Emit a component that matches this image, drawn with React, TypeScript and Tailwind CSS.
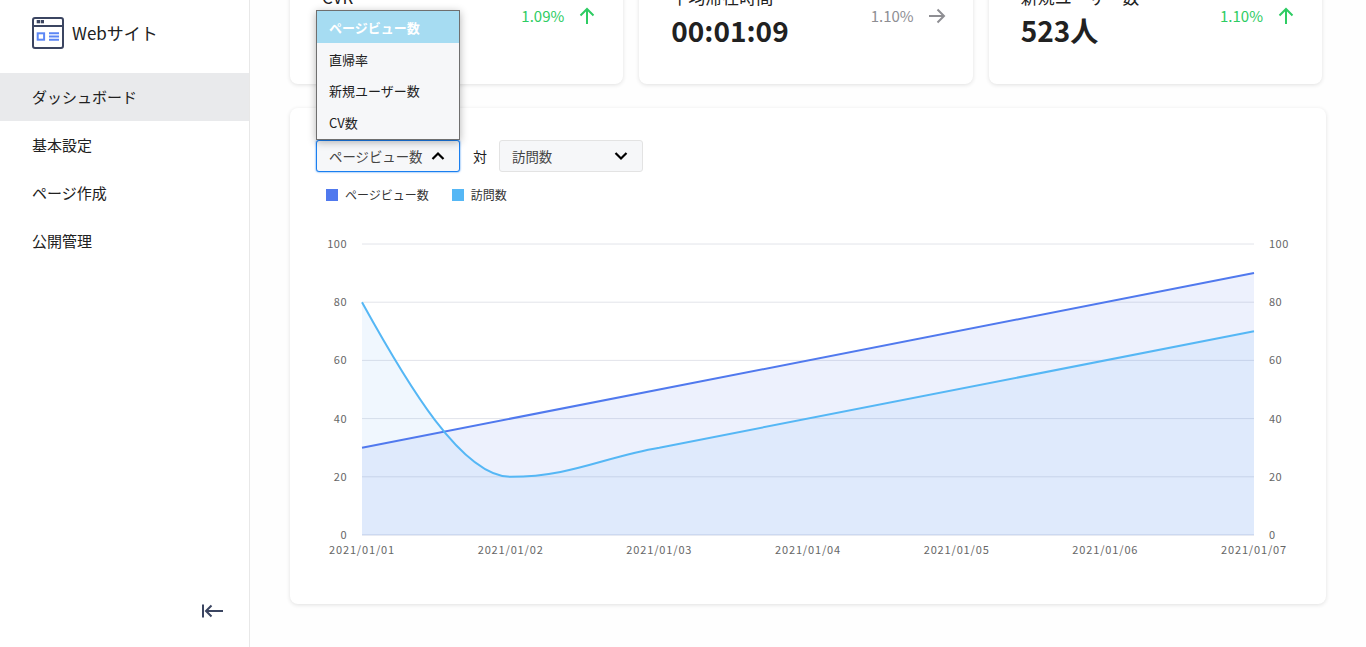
import React from 'react';

const FONT = "font-['Noto_Sans_CJK_JP','Noto_Sans',sans-serif]";

const menuItems = ['ダッシュボード', '基本設定', 'ページ作成', '公開管理'];
const options = ['ページビュー数', '直帰率', '新規ユーザー数', 'CV数'];

const stats = [
  { label: 'CVR', value: '', rate: '1.09%', color: 'text-[#2ecc63]', dir: 'up' },
  { label: '平均滞在時間', value: '00:01:09', rate: '1.10%', color: 'text-[#8e8e93]', dir: 'right' },
  { label: '新規ユーザー数', value: '523人', rate: '1.10%', color: 'text-[#2ecc63]', dir: 'up' },
];

function Arrow({ dir }: { dir: string }) {
  return (
    <svg className="w-[20px] h-[20px]" viewBox="0 0 20 20" fill="none" stroke="currentColor" strokeWidth={2}>
      {dir === 'up' ? <path d="M10 18V3M3.5 9.5L10 3l6.5 6.5" /> : <path d="M2 10h15M10.5 3.5L17 10l-6.5 6.5" />}
    </svg>
  );
}

function Chevron({ up }: { up?: boolean }) {
  return (
    <svg className="w-[14px] h-[10px] text-black" viewBox="0 0 14 10" fill="none" stroke="currentColor" strokeWidth={2.2}>
      <path d={up ? 'M1.5 8L7 2.5 12.5 8' : 'M1.5 2L7 7.5 12.5 2'} />
    </svg>
  );
}

function LogoIcon() {
  return (
    <svg className="w-[32px] h-[32px]" viewBox="0 0 32 32" fill="none">
      <rect x="1" y="1" width="30" height="30" rx="2" stroke="#3b4561" strokeWidth="2" />
      <path d="M1 9h30" stroke="#3b4561" strokeWidth="2" />
      <rect x="4.7" y="3" width="3.3" height="3.3" fill="#3b4561" />
      <rect x="8.7" y="3" width="3.3" height="3.3" fill="#3b4561" />
      <rect x="5.7" y="16.3" width="6.4" height="6.4" stroke="#5c87f5" strokeWidth="2" />
      <path d="M17 16.3h10M17 19.5h10M17 22.7h10" stroke="#5c87f5" strokeWidth="2" />
    </svg>
  );
}

const yTicks = [100, 80, 60, 40, 20, 0];
const xLabels = ['2021/01/01', '2021/01/02', '2021/01/03', '2021/01/04', '2021/01/05', '2021/01/06', '2021/01/07'];

function Chart() {
  const left = 72;
  const right = 964;
  const top = 10;
  const bottom = 301;
  const yOf = (v: number) => bottom - ((bottom - top) * v) / 100;
  const xStep = (right - left) / 6;
  const pv = `M${left} ${yOf(30)}L${right} ${yOf(90)}`;
  const visits = `M${left} ${yOf(80)}C${left + 45} ${yOf(52)} ${left + 100} ${yOf(20)} ${left + xStep} ${yOf(20)}C${left + xStep + 60} ${yOf(20)} ${left + xStep + 95} ${yOf(27)} ${left + 2 * xStep} ${yOf(30)}L${right} ${yOf(70)}`;
  return (
    <svg width="1036" height="335" viewBox="0 0 1036 335" className="block">
      {yTicks.map((t) => (
        <g key={t}>
          <line x1={left} x2={right} y1={yOf(t)} y2={yOf(t)} stroke={t === 0 ? '#d0d5e5' : '#e2e4ea'} strokeWidth="1" />
          <text x={left - 15} y={yOf(t) + 4} textAnchor="end" fontSize="11" fill="#666" letterSpacing="0.5">{t}</text>
          <text x={right + 15} y={yOf(t) + 4} fontSize="11" fill="#666" letterSpacing="0.5">{t}</text>
        </g>
      ))}
      <path d={`${pv}L${right} ${bottom}L${left} ${bottom}Z`} fill="#5079ee" fillOpacity="0.1" />
      <path d={`${visits}L${right} ${bottom}L${left} ${bottom}Z`} fill="#55a7f5" fillOpacity="0.09" />
      <path d={pv} fill="none" stroke="#5079ee" strokeWidth="2" />
      <path d={visits} fill="none" stroke="#55b7f5" strokeWidth="2" />
      {xLabels.map((l, i) => (
        <text key={l} x={left + xStep * i} y={bottom + 19} textAnchor="middle" fontSize="11" fill="#666" letterSpacing="0.85">{l}</text>
      ))}
    </svg>
  );
}

export default function App() {
  return (
    <div className={`${FONT} flex h-[647px] overflow-hidden bg-[#fefefe] text-[#212121]`}>
      {/* Sidebar */}
      <aside className="w-[250px] shrink-0 bg-white border-r border-[#e8e8e8] flex flex-col">
        <div className="h-[73px] pl-[32px] pt-[17px] flex items-start gap-[8px]">
          <LogoIcon />
          <span className="text-[17px] leading-[31px]">Webサイト</span>
        </div>
        <nav className="flex flex-col">
          {menuItems.map((item, i) => (
            <div key={item} className={`h-[48px] pl-[32px] flex items-center text-[15px] ${i === 0 ? 'bg-[#e9eaec]' : ''}`}>
              {item}
            </div>
          ))}
        </nav>
        <div className="mt-auto pb-[29px] pr-[26px] flex justify-end">
          <svg className="w-[21px] h-[14px] text-[#3b4561]" viewBox="0 0 21 14" fill="none" stroke="currentColor" strokeWidth="2">
            <path d="M1 0.5v13M21 7H4M9.5 1.5L4 7l5.5 5.5" />
          </svg>
        </div>
      </aside>

      {/* Main */}
      <main className="flex-1 pl-[40px] -mt-[16px]">
        <div className="w-[1032px] grid grid-cols-3 gap-[16px]">
          {stats.map((s) => (
            <div key={s.label} className="h-[100px] bg-white rounded-[8px] shadow-[0_1px_4px_rgba(0,0,0,0.12)] pl-[32px] pr-[26px] flex justify-between">
              <div>
                <div className="text-[17px] leading-[20px] pt-[3px]">{s.label}</div>
                <div className="text-[28px] leading-[38px] font-bold mt-[4px]">{s.value}</div>
              </div>
              <div className={`flex items-center gap-[13px] h-[20px] mt-[22px] text-[15px] ${s.color}`}>
                <span>{s.rate}</span>
                <Arrow dir={s.dir} />
              </div>
            </div>
          ))}
        </div>

        <section className="relative mt-[24px] w-[1036px] h-[496px] bg-white rounded-[8px] shadow-[0_1px_4px_rgba(0,0,0,0.12)]">
          <div className="pt-[32px] pl-[26px] flex items-center">
            <div className="relative">
              <div className="absolute bottom-full left-0 w-[144px] bg-[#f6f7f9] border border-[#6f6f6f] shadow-[0_2px_8px_rgba(0,0,0,0.3)] z-10">
                {options.map((o, i) => (
                  <div key={o} className={`h-[32px] pl-[12px] flex items-center text-[13px] ${i === 0 ? 'bg-[#a6dcf2] text-white font-bold pt-[1px]' : ''} ${i === 1 ? 'pt-[1px]' : ''}`}>
                    {o}
                  </div>
                ))}
              </div>
              <div className="w-[144px] h-[32px] bg-[#f6f7f9] border border-[#1a7ff0] rounded-[3px] shadow-[0_0_2px_#1a7ff0] pl-[12px] pr-[14px] flex items-center justify-between text-[13.4px] text-[#444]">
                <span>ページビュー数</span>
                <Chevron up />
              </div>
            </div>
            <span className="ml-[13px] mr-[12px] text-[14px]">対</span>
            <div className="w-[144px] h-[32px] bg-[#f6f7f9] border border-[#e3e3e3] rounded-[3px] pl-[12px] pr-[14px] flex items-center justify-between text-[13.4px] text-[#444]">
              <span>訪問数</span>
              <Chevron />
            </div>
          </div>

          <div className="pl-[36px] mt-[13px] h-[20px] flex items-center gap-[23px] text-[12px] text-[#333]">
            <div className="flex items-center gap-[7px]">
              <span className="w-[12px] h-[12px] bg-[#5079ee]" />
              ページビュー数
            </div>
            <div className="flex items-center gap-[7px]">
              <span className="w-[12px] h-[12px] bg-[#55b7f5]" />
              訪問数
            </div>
          </div>

          <div className="mt-[29px]">
            <Chart />
          </div>
        </section>
      </main>
    </div>
  );
}
